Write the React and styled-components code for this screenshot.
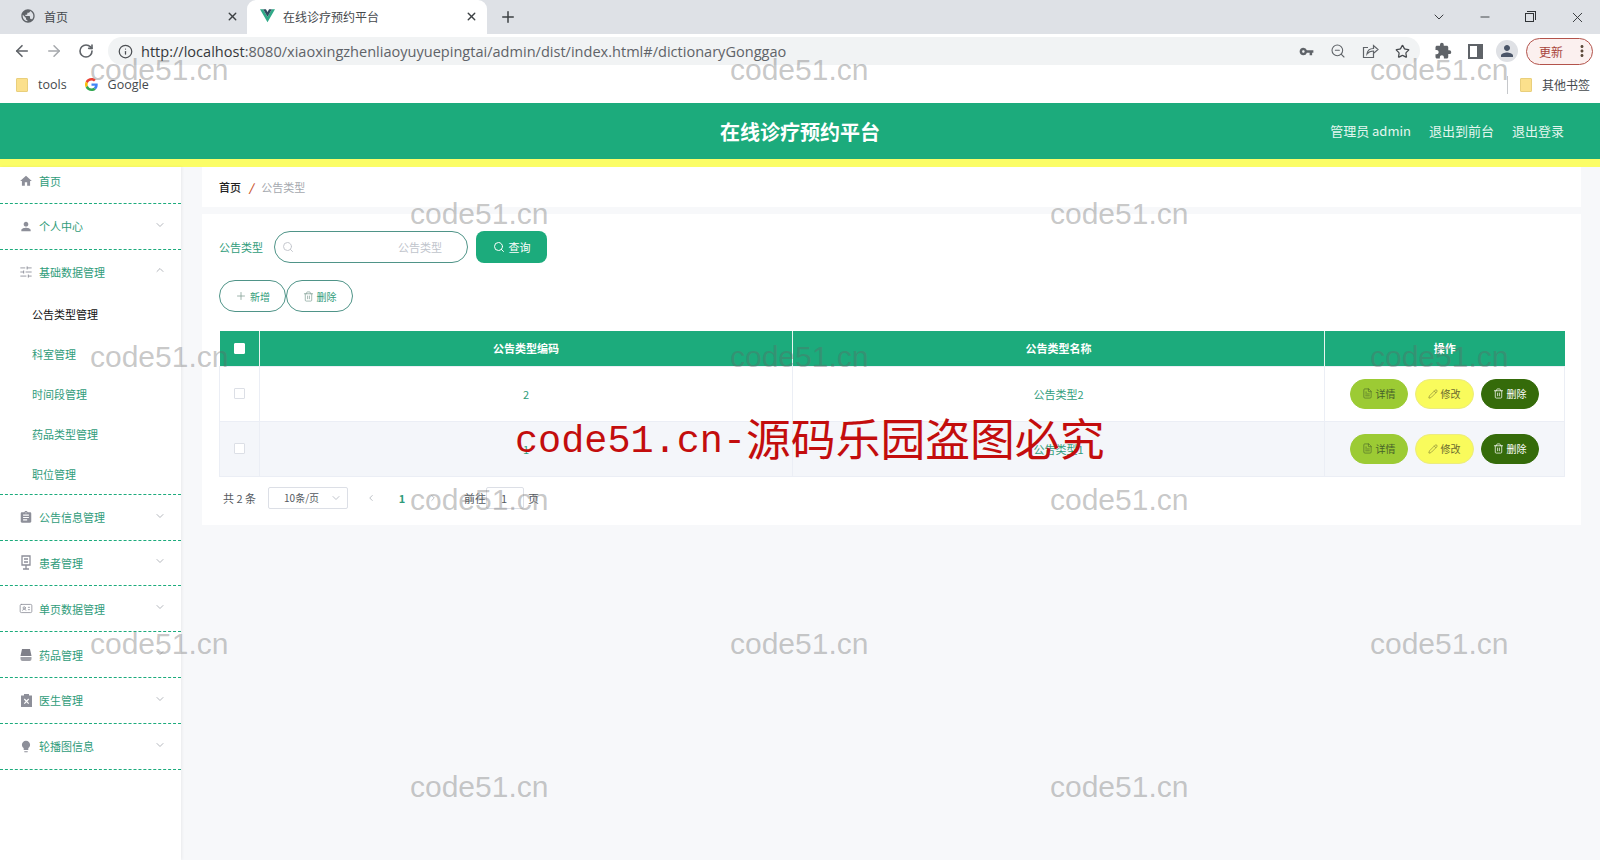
import React from 'react';
import styled, { createGlobalStyle } from 'styled-components';
import {
  ArrowLeft, ArrowRight, RotateCw, Info, ZoomOut, Star, Plus, X, Minus, ChevronDown, ChevronUp,
  ChevronLeft, ChevronRight, SlidersHorizontal, Search, Trash2, Pencil, FileText, IdCard,
} from 'lucide-react';
import { MdHome, MdPerson, MdAssignment, MdExtension, MdVpnKey, MdLightbulb, MdPublic, MdMoreVert } from 'react-icons/md';

const GREEN = '#1cab7c';
const TEXT_GREEN = '#2f9c7a';
const FONT = '"Noto Sans CJK SC", "Liberation Sans", sans-serif';

const Global = createGlobalStyle`
  html, body { margin: 0; padding: 0; height: 860px; overflow: hidden; background: #f7f8fa; }
  * { box-sizing: border-box; }
  body { font-family: ${FONT}; }
`;

const Page = styled.div`
  position: relative;
  width: 1600px;
  height: 860px;
  overflow: hidden;
  display: flex;
  flex-direction: column;
`;

/* browser chrome */
const TabStrip = styled.div`
  height: 34px;
  background: #dee1e6;
  display: flex;
  align-items: center;
  color: #45494d;
  font-size: 12px;
`;
const Tab = styled.div`
  width: ${p => p.$w}px;
  height: 34px;
  display: flex;
  align-items: center;
  padding: 0 ${p => p.$pr}px 2px ${p => p.$pl}px;
  background: ${p => (p.$active ? '#fff' : 'transparent')};
  border-radius: ${p => (p.$active ? '9px 9px 0 0' : '0')};
  gap: 8px;
`;
const TabTitle = styled.span`
  flex: 1;
`;
const NewTab = styled.div`
  width: 42px;
  display: flex;
  justify-content: center;
`;
const WindowControls = styled.div`
  margin-left: auto;
  display: flex;
  color: #2f3235;
`;
const WinBtn = styled.div`
  width: 46px;
  height: 28px;
  display: flex;
  align-items: center;
  justify-content: center;
`;
const Restore = styled.div`
  position: relative;
  width: 9px;
  height: 9px;
  margin-right: 4px;
  border: 1px solid #2f3235;
  &::after {
    content: '';
    position: absolute;
    top: -3px;
    left: 1px;
    width: 8px;
    height: 8px;
    border-top: 1px solid #2f3235;
    border-right: 1px solid #2f3235;
  }
`;
const Toolbar = styled.div`
  height: 34px;
  background: #fff;
  display: flex;
  align-items: center;
  padding-left: 6px;
`;
const ToolBtn = styled.div`
  width: ${p => p.$w || 32}px;
  height: 28px;
  margin-left: ${p => p.$ml || 0}px;
  display: flex;
  align-items: center;
  justify-content: center;
  color: ${p => p.$color || '#5f6368'};
`;
const AddressBar = styled.div`
  width: 1312px;
  height: 28px;
  margin-left: 6px;
  padding: 0 2px 0 10px;
  background: #f1f3f4;
  border-radius: 14px;
  display: flex;
  align-items: center;
  color: #5f6368;
`;
const Url = styled.span`
  margin-left: 8px;
  flex: 1;
  font-family: "Open Sans", sans-serif;
  font-size: 14.55px;
  color: #5f6368;
  white-space: nowrap;
  b { font-weight: 400; color: #35383b; }
`;
const Avatar = styled.div`
  width: 22px;
  height: 22px;
  border-radius: 50%;
  background: #dfe1e5;
  color: #4a5568;
  display: flex;
  align-items: center;
  justify-content: center;
`;
const UpdatePill = styled.div`
  width: 67px;
  height: 27px;
  border: 1px solid #b3534b;
  border-radius: 14px;
  background: #fbf0ef;
  color: #a8443c;
  font-size: 12px;
  display: flex;
  align-items: center;
  padding-left: 12px;
  justify-content: space-between;
  svg { color: #5c4a3a; margin-right: 1px; }
`;
const Bookmarks = styled.div`
  height: 35px;
  background: #fff;
  display: flex;
  align-items: center;
  padding: 0 10px 2px 16px;
  font-size: 12px;
  color: #45494d;
`;
const Folder = styled.div`
  width: 12px;
  height: 14px;
  background: #fbe08c;
  border: 1px solid #e9cf7c;
  border-radius: 1px;
`;
const BookLabel = styled.span`
  display: flex;
  margin-left: ${p => p.$ml}px;
  font-family: ${p => (p.$latin ? '"Open Sans", sans-serif' : FONT)};
  font-size: ${p => (p.$latin ? '12.5px' : '12px')};
`;
const BookSpacer = styled.div`
  flex: 1;
`;
const BookDivider = styled.div`
  width: 1px;
  height: 18px;
  background: #c6c8cb;
  margin-right: 12px;
`;

/* app header */
const Header = styled.header`
  height: 56px;
  background: ${GREEN};
  display: grid;
  grid-template-columns: 1fr auto 1fr;
  align-items: center;
  color: #fff;
  padding: 0 36px;
`;
const Title = styled.div`
  font-size: 20px;
  font-weight: 700;
`;
const HeaderLinks = styled.div`
  justify-self: end;
  display: flex;
  gap: 18px;
  padding-bottom: 2px;
  font-size: 13px;
  color: #e4f6ef;
`;
const YellowBar = styled.div`
  height: 8px;
  background: #fbfd66;
`;
const Body = styled.div`
  flex: 1;
  display: flex;
  min-height: 0;
`;

/* side menu */
const Side = styled.aside`
  width: 182px;
  background: #fff;
  box-shadow: 1px 0 3px rgba(0, 0, 0, .06);
  font-size: 11px;
  color: ${TEXT_GREEN};
`;
const MenuItem = styled.div`
  height: ${p => p.$h || 45.8}px;
  padding: 0 15px ${p => p.$pb || 0}px 19px;
  border-bottom: ${p => (p.$open ? '0' : `1px dashed ${GREEN}`)};
  display: flex;
  align-items: center;
`;
const MenuIcon = styled.span`
  width: 14px;
  height: 16px;
  margin-right: 6px;
  color: #8d8f99;
  display: flex;
  align-items: center;
  justify-content: center;
`;
const MenuLabel = styled.span`
  flex: 1;
`;
const Arrow = styled.span`
  color: #b4b7bd;
  display: flex;
  margin-top: -3px;
`;
const SubItem = styled.div`
  height: 40px;
  display: flex;
  align-items: center;
  padding-left: 32px;
  color: ${p => (p.$active ? '#111' : TEXT_GREEN)};
`;
const SubGroup = styled.div`
  border-bottom: 1px dashed ${GREEN};
`;

/* main content */
const Main = styled.main`
  flex: 1;
  padding: 0 19px 0 21px;
  display: flex;
  flex-direction: column;
  gap: 7px;
`;
const Crumbs = styled.div`
  height: 40px;
  background: #fff;
  padding: 0 17px;
  display: flex;
  align-items: center;
  font-size: 11px;
  color: #a4a8ae;
`;
const CrumbHome = styled.span`
  color: #222;
  font-weight: 500;
`;
const CrumbSep = styled.span`
  color: #c8532a;
  margin: 0 8px;
  font-weight: 700;
  font-style: italic;
`;
const Panel = styled.section`
  height: 311px;
  background: #fff;
  padding: 17px 16px 0 17px;
  font-size: 11px;
`;
const SearchRow = styled.div`
  height: 32px;
  display: flex;
  align-items: center;
  color: ${TEXT_GREEN};
`;
const SearchField = styled.div`
  position: relative;
  width: 194px;
  height: 32px;
  margin: 0 8px 0 11px;
  svg { position: absolute; left: 8px; top: 10px; color: #c5c8ce; }
`;
const SearchInput = styled.input`
  width: 100%;
  height: 100%;
  border: 1px solid #4f9488;
  border-radius: 16px;
  padding: 0 25px 0 30px;
  outline: none;
  text-align: right;
  font-size: 11px;
  font-family: ${FONT};
  &::placeholder { color: #c0c4cc; opacity: 1; }
`;
const QueryBtn = styled.button`
  width: 71px;
  height: 32px;
  border: 0;
  border-radius: 8px;
  background: ${GREEN};
  color: #fff;
  font-size: 11px;
  font-family: ${FONT};
  display: flex;
  align-items: center;
  justify-content: center;
  gap: 4px;
`;
const ActionRow = styled.div`
  height: 32px;
  margin: 17px 0 19px;
  display: flex;
`;
const OutlineBtn = styled.button`
  width: 67px;
  height: 32px;
  border: 1px solid #4f9488;
  border-radius: 16px;
  background: #fff;
  color: ${TEXT_GREEN};
  font-size: 10px;
  font-family: ${FONT};
  display: flex;
  align-items: center;
  justify-content: center;
  gap: 3px;
  svg { color: #7d9c92; }
`;
const Table = styled.table`
  width: 1345px;
  table-layout: fixed;
  border-collapse: collapse;
`;
const Th = styled.th`
  width: ${p => p.$w}px;
  height: 35px;
  padding: 0;
  background: ${GREEN};
  color: #fff;
  font-size: 11px;
  font-weight: 700;
  border-right: 1px solid #e7f5f0;
  &:last-child { border-right: 0; }
`;
const Tr = styled.tr`
  background: ${p => (p.$alt ? '#f4f6fa' : '#fff')};
`;
const Td = styled.td`
  height: 55px;
  padding: 0;
  text-align: center;
  color: ${TEXT_GREEN};
  font-size: 11px;
  border: 1px solid #ebeef5;
`;
const Check = styled.span`
  display: block;
  width: 11px;
  height: 11px;
  margin: 0 auto;
  border: 1px solid ${p => (p.$head ? '#fff' : '#dcdfe6')};
  border-radius: 1px;
  background: #fff;
`;
const RowActions = styled.div`
  display: flex;
  justify-content: center;
  gap: 7px;
  padding-right: 1px;
`;
const RowBtn = styled.button`
  width: ${p => p.$w}px;
  height: 30px;
  border: 1px solid ${p => p.$border};
  border-radius: 15px;
  background: ${p => p.$bg};
  color: ${p => p.$color};
  font-size: 10px;
  font-family: ${FONT};
  padding: 0;
  display: flex;
  align-items: center;
  justify-content: center;
  gap: 3px;
`;
const Pager = styled.div`
  height: 22px;
  margin-top: 10px;
  padding-left: 4px;
  display: flex;
  align-items: center;
  color: #555a61;
  font-size: 11px;
`;
const PageSelect = styled.div`
  width: 80px;
  height: 22px;
  margin: 0 18px 0 12px;
  border: 1px solid #dcdfe6;
  border-radius: 2px;
  padding: 0 5px 0 15px;
  font-size: 10px;
  display: flex;
  align-items: center;
  justify-content: space-between;
  svg { color: #c0c4cc; }
`;
const PageArrow = styled.span`
  width: 10px;
  color: #b0b4bb;
  display: flex;
`;
const PageNum = styled.span`
  width: 52px;
  text-align: center;
  color: ${TEXT_GREEN};
  font-weight: 700;
`;
const JumpInput = styled.div`
  width: 38px;
  height: 22px;
  margin: 0 4px 0 0;
  border: 1px solid #dcdfe6;
  border-radius: 2px;
  display: flex;
  align-items: center;
  justify-content: center;
  padding-right: 2px;
`;
const JumpLabel = styled.span`
  margin-left: ${p => p.$ml || 0}px;
`;

/* overlays */
const Mark = styled.div`
  position: absolute;
  left: ${p => p.$x}px;
  top: ${p => p.$y}px;
  font-family: "Liberation Sans", sans-serif;
  font-size: 30px;
  line-height: 34px;
  color: rgba(100, 100, 100, .36);
  pointer-events: none;
  white-space: nowrap;
`;
const Stamp = styled.div`
  position: absolute;
  left: 515px;
  top: 413px;
  height: 56px;
  display: flex;
  align-items: center;
  color: #c30d0d;
  white-space: nowrap;
  pointer-events: none;
`;
const StampLatin = styled.span`
  margin-top: 2px;
  font-family: "Liberation Mono", monospace;
  font-size: 38.5px;
`;
const StampCjk = styled.span`
  margin-bottom: 10px;
  font-family: "Noto Sans CJK SC", sans-serif;
  font-size: 44.8px;
  font-weight: 400;
`;

const Vue = () => (
  <svg width="15" height="14" viewBox="0 0 24 22">
    <path d="M0 0h5l7 12 7-12h5L12 21z" fill="#2fa987" />
    <path d="M5 0h4.500L12 4.500 14.500 0H19l-7 12z" fill="#2f4a5e" />
  </svg>
);
const GoogleG = () => (
  <svg width="13" height="13" viewBox="0 0 48 48">
    <path fill="#ea4335" d="M24 9.500c3.500 0 6.700 1.300 9.100 3.500l6.800-6.800C35.800 2.400 30.300 0 24 0 14.600 0 6.500 5.400 2.600 13.200l7.900 6.200C12.400 13.600 17.700 9.500 24 9.500z" />
    <path fill="#4285f4" d="M46.900 24.500c0-1.600-.1-3.100-.4-4.500H24v9h12.900c-.6 3-2.200 5.500-4.700 7.200l7.700 6c4.500-4.200 7-10.300 7-17.700z" />
    <path fill="#fbbc05" d="M10.500 28.600c-.5-1.400-.8-3-.8-4.600s.3-3.200.8-4.600l-7.900-6.200C.9 16.500 0 20.100 0 24s.9 7.500 2.600 10.800z" />
    <path fill="#34a853" d="M24 48c6.500 0 11.900-2.100 15.900-5.800l-7.700-6c-2.100 1.400-4.900 2.300-8.200 2.300-6.300 0-11.600-4.200-13.500-9.900l-7.900 6.100C6.500 42.600 14.600 48 24 48z" />
  </svg>
);
const PanelIcon = () => (
  <svg width="15" height="15" viewBox="0 0 15 15">
    <path d="M1 1h13v13H1z" fill="none" stroke="#5f6368" strokeWidth="2" />
    <path d="M9 1h5v13H9z" fill="#5f6368" />
  </svg>
);
const ShareIcon = () => (
  <svg width="17" height="16" viewBox="0 0 17 16" fill="none" stroke="#5f6368" strokeWidth="1.200">
    <path d="M6 4.500H1.500v10h10V11" />
    <path d="M5 11c.4-3.400 3-5.500 6.500-5.500V2.500l4.500 4-4.500 4V8C8.500 8 6.500 9 5 11z" />
  </svg>
);
const DoctorIcon = () => (
  <svg width="14" height="15" viewBox="0 0 14 15">
    <path d="M3 1h8v9H3z M7 10v4 M4 14h6 M5 4h4 M5 7h4" fill="none" stroke="#8d8f99" strokeWidth="1.300" />
  </svg>
);
const DrugIcon = () => (
  <svg width="14" height="14" viewBox="0 0 14 14" fill="#7f8089">
    <path d="M3 1h8l1.500 7h-11z" />
    <path d="M1.500 9h11v2a2 2 0 0 1-2 2h-7a2 2 0 0 1-2-2z" opacity=".75" />
  </svg>
);
const DoctorBoardIcon = () => (
  <svg width="13" height="15" viewBox="0 0 13 15">
    <path d="M1 2.500h3V1h5v1.500h3V14H1z" fill="#8d8f99" />
    <path d="M4.300 6l4.400 4.600M8.700 6l-4.400 4.600" stroke="#fff" strokeWidth="1.200" />
  </svg>
);

const menus = [
  { name: '公告信息管理', icon: <MdAssignment size={15} /> },
  { name: '患者管理', icon: <DoctorIcon /> },
  { name: '单页数据管理', icon: <IdCard size={15} strokeWidth={1.400} /> },
  { name: '药品管理', icon: <DrugIcon /> },
  { name: '医生管理', icon: <DoctorBoardIcon /> },
  { name: '轮播图信息', icon: <MdLightbulb size={17} /> },
];
const subs = ['公告类型管理', '科室管理', '时间段管理', '药品类型管理', '职位管理'];
const rows = [
  { code: '2', name: '公告类型2' },
  { code: '1', name: '公告类型1', alt: true },
];
const marks = [
  [90, 53], [730, 53], [1370, 53],
  [410, 197], [1050, 197],
  [90, 340], [730, 340], [1370, 340],
  [410, 483], [1050, 483],
  [90, 627], [730, 627], [1370, 627],
  [410, 770], [1050, 770],
];

const App = () => {
  return (
    <Page>
      <Global />
      <TabStrip>
        <Tab $w={247} $pl={20} $pr={8}>
          <MdPublic size={16} color="#5f6368" />
          <TabTitle>首页</TabTitle>
          <X size={13} strokeWidth={2.500} color="#3c4043" />
        </Tab>
        <Tab $w={240} $pl={13} $pr={9} $active>
          <Vue />
          <TabTitle>在线诊疗预约平台</TabTitle>
          <X size={13} strokeWidth={2.500} color="#3c4043" />
        </Tab>
        <NewTab><Plus size={18} strokeWidth={2} color="#3c4043" /></NewTab>
        <WindowControls>
          <WinBtn><ChevronDown size={16} strokeWidth={1.400} /></WinBtn>
          <WinBtn><Minus size={14} strokeWidth={1.500} /></WinBtn>
          <WinBtn><Restore /></WinBtn>
          <WinBtn><X size={17} strokeWidth={1.300} /></WinBtn>
        </WindowControls>
      </TabStrip>
      <Toolbar>
        <ToolBtn><ArrowLeft size={18} strokeWidth={2.200} /></ToolBtn>
        <ToolBtn $color="#a5a8ac"><ArrowRight size={18} strokeWidth={2} /></ToolBtn>
        <ToolBtn><RotateCw size={16} strokeWidth={2.400} /></ToolBtn>
        <AddressBar>
          <Info size={15} strokeWidth={2} color="#4c4f53" />
          <Url><b>http://localhost</b>:8080/xiaoxingzhenliaoyuyuepingtai/admin/dist/index.html#/dictionaryGonggao</Url>
          <ToolBtn><MdVpnKey size={15} /></ToolBtn>
          <ToolBtn><ZoomOut size={16} strokeWidth={1.600} /></ToolBtn>
          <ToolBtn><ShareIcon /></ToolBtn>
          <ToolBtn><Star size={15} strokeWidth={2} color="#45494d" /></ToolBtn>
        </AddressBar>
        <ToolBtn $w={38} $ml={4}><MdExtension size={18} /></ToolBtn>
        <ToolBtn $w={26}><PanelIcon /></ToolBtn>
        <ToolBtn $w={38}><Avatar><MdPerson size={18} /></Avatar></ToolBtn>
        <UpdatePill>更新<MdMoreVert size={18} /></UpdatePill>
      </Toolbar>
      <Bookmarks>
        <Folder />
        <BookLabel $ml={10} $latin>tools</BookLabel>
        <BookLabel $ml={18}><GoogleG /></BookLabel>
        <BookLabel $ml={10} $latin>Google</BookLabel>
        <BookSpacer />
        <BookDivider />
        <Folder />
        <BookLabel $ml={10}>其他书签</BookLabel>
      </Bookmarks>
      <Header>
        <span />
        <Title>在线诊疗预约平台</Title>
        <HeaderLinks>
          <span>管理员 admin</span>
          <span>退出到前台</span>
          <span>退出登录</span>
        </HeaderLinks>
      </Header>
      <YellowBar />
      <Body>
        <Side>
          <MenuItem $h={37} $pb={8}>
            <MenuIcon><MdHome size={16} /></MenuIcon>
            <MenuLabel>首页</MenuLabel>
          </MenuItem>
          <MenuItem>
            <MenuIcon><MdPerson size={17} /></MenuIcon>
            <MenuLabel>个人中心</MenuLabel>
            <Arrow><ChevronDown size={12} /></Arrow>
          </MenuItem>
          <SubGroup>
            <MenuItem $open $h={44}>
              <MenuIcon><SlidersHorizontal size={14} strokeWidth={1.500} /></MenuIcon>
              <MenuLabel>基础数据管理</MenuLabel>
              <Arrow><ChevronUp size={12} /></Arrow>
            </MenuItem>
            {subs.map((s, i) => <SubItem key={s} $active={i === 0}>{s}</SubItem>)}
          </SubGroup>
          {menus.map(m => (
            <MenuItem key={m.name}>
              <MenuIcon>{m.icon}</MenuIcon>
              <MenuLabel>{m.name}</MenuLabel>
              <Arrow><ChevronDown size={12} /></Arrow>
            </MenuItem>
          ))}
        </Side>
        <Main>
          <Crumbs>
            <CrumbHome>首页</CrumbHome>
            <CrumbSep>/</CrumbSep>
            公告类型
          </Crumbs>
          <Panel>
            <SearchRow>
              公告类型
              <SearchField>
                <Search size={12} />
                <SearchInput placeholder="公告类型" readOnly />
              </SearchField>
              <QueryBtn><Search size={12} />查询</QueryBtn>
            </SearchRow>
            <ActionRow>
              <OutlineBtn><Plus size={12} strokeWidth={1.500} />新增</OutlineBtn>
              <OutlineBtn><Trash2 size={11} strokeWidth={1.500} />删除</OutlineBtn>
            </ActionRow>
            <Table>
              <thead>
                <tr>
                  <Th $w={40}><Check $head /></Th>
                  <Th $w={533}>公告类型编码</Th>
                  <Th $w={532}>公告类型名称</Th>
                  <Th $w={240}>操作</Th>
                </tr>
              </thead>
              <tbody>
                {rows.map(r => (
                  <Tr key={r.code} $alt={r.alt}>
                    <Td><Check /></Td>
                    <Td>{r.code}</Td>
                    <Td>{r.name}</Td>
                    <Td>
                      <RowActions>
                        <RowBtn $w={58} $bg="#9ccb34" $border="#9ccb34" $color="#47622a"><FileText size={11} strokeWidth={1.300} />详情</RowBtn>
                        <RowBtn $w={59} $bg="#f9fb5c" $border="#ecec7e" $color="#6b6b2f"><Pencil size={10} strokeWidth={1.300} />修改</RowBtn>
                        <RowBtn $w={58} $bg="#356b0a" $border="#356b0a" $color="#fff"><Trash2 size={11} strokeWidth={1.600} />删除</RowBtn>
                      </RowActions>
                    </Td>
                  </Tr>
                ))}
              </tbody>
            </Table>
            <Pager>
              共 2 条
              <PageSelect>10条/页<ChevronDown size={12} /></PageSelect>
              <PageArrow><ChevronLeft size={12} /></PageArrow>
              <PageNum>1</PageNum>
              <PageArrow><ChevronRight size={12} /></PageArrow>
              <JumpLabel $ml={26}>前往</JumpLabel>
              <JumpInput>1</JumpInput>
              <JumpLabel>页</JumpLabel>
            </Pager>
          </Panel>
        </Main>
      </Body>
      {marks.map(([x, y]) => <Mark key={`${x}-${y}`} $x={x} $y={y}>code51.cn</Mark>)}
      <Stamp>
        <StampLatin>code51.cn-</StampLatin>
        <StampCjk>源码乐园盗图必究</StampCjk>
      </Stamp>
    </Page>
  );
};

export default App;
